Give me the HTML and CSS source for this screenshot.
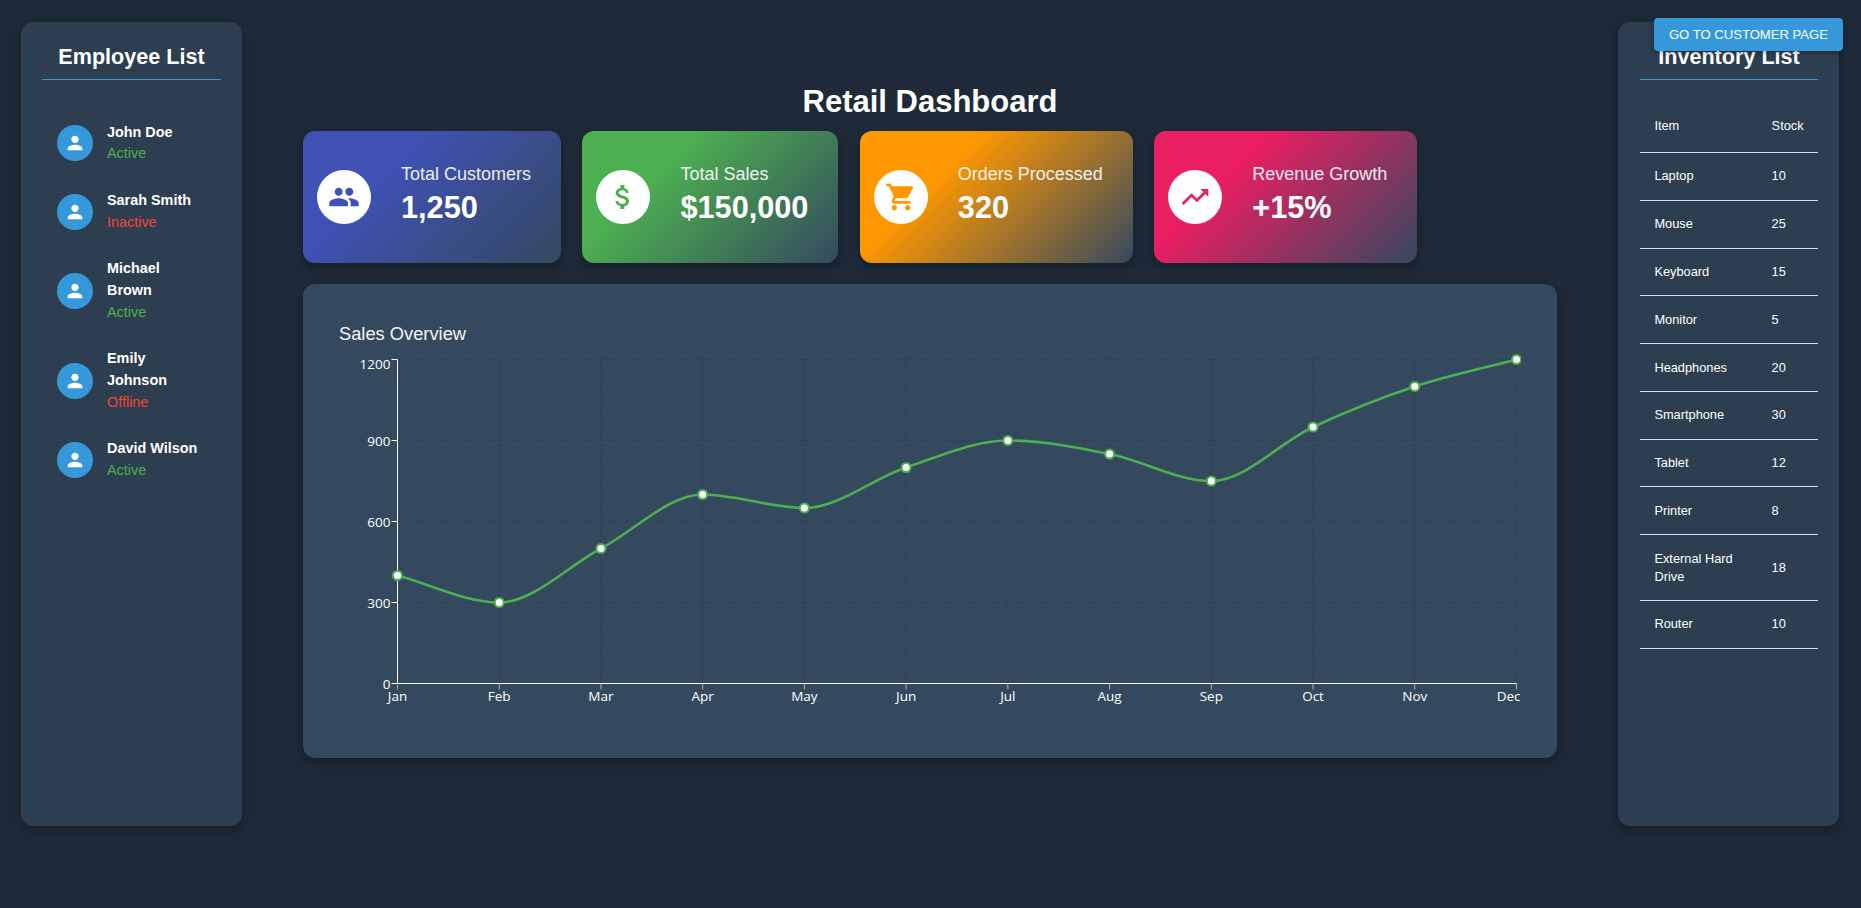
FILE: index.html
```html
<!DOCTYPE html>
<html>

<head>
    <meta charset="utf-8">
    <title>Retail Dashboard</title>
    <link rel="stylesheet" href="styles.css">
</head>

<body>
    <a class="customer-btn" href="#">Go to Customer Page</a>

    <div class="layout">
        <!-- Employee list -->
        <aside class="sidebar">
            <h2>Employee List</h2>
            <ul class="employee-list">
                <li class="employee">
                    <span class="avatar"><svg viewBox="0 0 24 24"><path d="M12 12c2.21 0 4-1.79 4-4s-1.79-4-4-4-4 1.79-4 4 1.79 4 4 4zm0 2c-2.67 0-8 1.34-8 4v2h16v-2c0-2.66-5.33-4-8-4z"/></svg></span>
                    <div class="employee-info">
                        <div class="employee-name">John Doe</div>
                        <div class="status-on">Active</div>
                    </div>
                </li>
                <li class="employee">
                    <span class="avatar"><svg viewBox="0 0 24 24"><path d="M12 12c2.21 0 4-1.79 4-4s-1.79-4-4-4-4 1.79-4 4 1.79 4 4 4zm0 2c-2.67 0-8 1.34-8 4v2h16v-2c0-2.66-5.33-4-8-4z"/></svg></span>
                    <div class="employee-info">
                        <div class="employee-name">Sarah Smith</div>
                        <div class="status-off">Inactive</div>
                    </div>
                </li>
                <li class="employee">
                    <span class="avatar"><svg viewBox="0 0 24 24"><path d="M12 12c2.21 0 4-1.79 4-4s-1.79-4-4-4-4 1.79-4 4 1.79 4 4 4zm0 2c-2.67 0-8 1.34-8 4v2h16v-2c0-2.66-5.33-4-8-4z"/></svg></span>
                    <div class="employee-info">
                        <div class="employee-name">Michael Brown</div>
                        <div class="status-on">Active</div>
                    </div>
                </li>
                <li class="employee">
                    <span class="avatar"><svg viewBox="0 0 24 24"><path d="M12 12c2.21 0 4-1.79 4-4s-1.79-4-4-4-4 1.79-4 4 1.79 4 4 4zm0 2c-2.67 0-8 1.34-8 4v2h16v-2c0-2.66-5.33-4-8-4z"/></svg></span>
                    <div class="employee-info">
                        <div class="employee-name">Emily Johnson</div>
                        <div class="status-off">Offline</div>
                    </div>
                </li>
                <li class="employee">
                    <span class="avatar"><svg viewBox="0 0 24 24"><path d="M12 12c2.21 0 4-1.79 4-4s-1.79-4-4-4-4 1.79-4 4 1.79 4 4 4zm0 2c-2.67 0-8 1.34-8 4v2h16v-2c0-2.66-5.33-4-8-4z"/></svg></span>
                    <div class="employee-info">
                        <div class="employee-name">David Wilson</div>
                        <div class="status-on">Active</div>
                    </div>
                </li>
            </ul>
        </aside>

        <main class="main">
            <h1>Retail Dashboard</h1>

            <div class="cards">
                <div class="card card-customers">
                    <span class="card-icon"><svg viewBox="0 0 24 24"><path d="M16 11c1.66 0 2.99-1.34 2.99-3S17.66 5 16 5c-1.66 0-3 1.34-3 3s1.34 3 3 3zm-8 0c1.66 0 2.99-1.34 2.99-3S9.66 5 8 5C6.34 5 5 6.34 5 8s1.34 3 3 3zm0 2c-2.33 0-7 1.17-7 3.5V19h14v-2.5c0-2.33-4.67-3.5-7-3.5zm8 0c-.29 0-.62.02-.97.05 1.16.84 1.97 1.97 1.97 3.45V19h6v-2.5c0-2.33-4.67-3.5-7-3.5z"/></svg></span>
                    <div class="card-text">
                        <div class="card-label">Total Customers</div>
                        <div class="card-value">1,250</div>
                    </div>
                </div>
                <div class="card card-sales">
                    <span class="card-icon"><svg viewBox="0 0 24 24"><path d="M11.8 10.9c-2.27-.59-3-1.2-3-2.15 0-1.09 1.01-1.85 2.7-1.85 1.78 0 2.44.85 2.5 2.1h2.21c-.07-1.72-1.12-3.3-3.21-3.81V3h-3v2.16c-1.94.42-3.5 1.68-3.5 3.61 0 2.31 1.91 3.46 4.7 4.13 2.5.6 3 1.48 3 2.41 0 .69-.49 1.79-2.7 1.79-2.06 0-2.87-.92-2.98-2.1h-2.2c.12 2.19 1.76 3.42 3.68 3.83V21h3v-2.15c1.95-.37 3.5-1.5 3.5-3.55 0-2.84-2.43-3.81-4.7-4.4z"/></svg></span>
                    <div class="card-text">
                        <div class="card-label">Total Sales</div>
                        <div class="card-value">$150,000</div>
                    </div>
                </div>
                <div class="card card-orders">
                    <span class="card-icon"><svg viewBox="0 0 24 24"><path d="M7 18c-1.1 0-1.99.9-1.99 2S5.9 22 7 22s2-.9 2-2-.9-2-2-2zM1 2v2h2l3.6 7.59-1.35 2.45c-.16.28-.25.61-.25.96 0 1.1.9 2 2 2h12v-2H7.42c-.14 0-.25-.11-.25-.25l.03-.12.9-1.63h7.45c.75 0 1.41-.41 1.75-1.03l3.58-6.49c.08-.14.12-.31.12-.48 0-.55-.45-1-1-1H5.21l-.94-2H1zm16 16c-1.1 0-1.99.9-1.99 2s.89 2 1.99 2 2-.9 2-2-.9-2-2-2z"/></svg></span>
                    <div class="card-text">
                        <div class="card-label">Orders Processed</div>
                        <div class="card-value">320</div>
                    </div>
                </div>
                <div class="card card-revenue">
                    <span class="card-icon"><svg viewBox="0 0 24 24"><path d="M16 6l2.29 2.29-4.88 4.88-4-4L2 16.59 3.41 18l6-6 4 4 6.3-6.29L22 12V6z"/></svg></span>
                    <div class="card-text">
                        <div class="card-label">Revenue Growth</div>
                        <div class="card-value">+15%</div>
                    </div>
                </div>
            </div>

            <!-- Sales chart, drawn by chart.js -->
            <section class="chart-panel">
                <h3>Sales Overview</h3>
                <svg id="salesChart" class="sales-chart" viewBox="0 0 1182 368"></svg>
            </section>
        </main>

        <!-- Inventory list -->
        <aside class="sidebar sidebar-inventory">
            <h2>Inventory List</h2>
            <table class="inventory">
                <thead>
                    <tr><th>Item</th><th>Stock</th></tr>
                </thead>
                <tbody>
                    <tr><td>Laptop</td><td>10</td></tr>
                    <tr><td>Mouse</td><td>25</td></tr>
                    <tr><td>Keyboard</td><td>15</td></tr>
                    <tr><td>Monitor</td><td>5</td></tr>
                    <tr><td>Headphones</td><td>20</td></tr>
                    <tr><td>Smartphone</td><td>30</td></tr>
                    <tr><td>Tablet</td><td>12</td></tr>
                    <tr><td>Printer</td><td>8</td></tr>
                    <tr><td>External Hard Drive</td><td>18</td></tr>
                    <tr><td>Router</td><td>10</td></tr>
                </tbody>
            </table>
        </aside>
    </div>

    <script src="chart.js"></script>
</body>

</html>
```

FILE: styles.css
```css
body {
    font-family: "Liberation Sans", Arial, sans-serif;
    background-color: #1e2a38;
    color: #fff;
    margin: 0;
    padding: 0;
    height: 100vh;
    overflow: hidden;
}

.layout {
    display: flex;
    gap: 61px;
    padding: 22px 22px 0 21px;
}

/* Sidebars */
.sidebar {
    flex: 0 0 221px;
    box-sizing: border-box;
    height: 804px;
    padding: 21px;
    background-color: #2c3e50;
    border-radius: 12px;
    box-shadow: 0 4px 12px rgba(0, 0, 0, 0.3);
}

.sidebar-inventory {
    padding-left: 22px;
}

.sidebar h2 {
    margin: 0;
    padding: 1px 0 9px;
    font-size: 21.6px;
    line-height: 26px;
    text-align: center;
    border-bottom: 1px solid #3498db;
}

.employee-list {
    list-style-type: none;
    margin: 29px 0 0;
    padding: 0;
}

.employee {
    display: flex;
    align-items: center;
    gap: 14px;
    padding: 12.6px 15px;
    font-size: 14.4px;
    line-height: 21.6px;
}

.avatar {
    flex: 0 0 36px;
    height: 36px;
    display: flex;
    align-items: center;
    justify-content: center;
    background-color: #3498db;
    border-radius: 50%;
}

.avatar svg {
    width: 22px;
    height: 22px;
    fill: #fff;
}

.employee-name {
    font-weight: bold;
}

.status-on {
    color: #4caf50;
}

.status-off {
    color: #f44336;
}

/* Inventory table */
.inventory {
    width: 100%;
    margin-top: 20px;
    border-collapse: collapse;
    font-size: 12.8px;
    line-height: 18px;
}

.inventory th,
.inventory td {
    padding: 14.4px;
    text-align: left;
    font-weight: normal;
    border-bottom: 1px solid #ddd;
}

.inventory th {
    padding-top: 17px;
    padding-bottom: 17px;
}

/* Main column */
.main {
    flex: 1;
    min-width: 0;
    display: flex;
    flex-direction: column;
    padding-top: 61px;
}

.main h1 {
    margin: 0 0 11px;
    font-size: 31px;
    line-height: 37px;
    text-align: center;
}

.cards {
    display: flex;
    gap: 21.6px;
    margin-bottom: 21px;
}

.card {
    display: flex;
    align-items: center;
    gap: 30px;
    height: 132px;
    box-sizing: border-box;
    padding: 0 29.8px 0 14px;
    border-radius: 12px;
    box-shadow: 0 4px 10px rgba(0, 0, 0, 0.3);
}

.card-customers {
    background: linear-gradient(135deg, #3f51b5 30%, #34495e 100%);
    color: #3f51b5;
}

.card-sales {
    background: linear-gradient(135deg, #4caf50 30%, #34495e 100%);
    color: #4caf50;
}

.card-orders {
    background: linear-gradient(135deg, #ff9800 30%, #34495e 100%);
    color: #ff9800;
}

.card-revenue {
    background: linear-gradient(135deg, #e91e63 30%, #34495e 100%);
    color: #e91e63;
}

.card-icon {
    flex: 0 0 54px;
    height: 54px;
    display: flex;
    align-items: center;
    justify-content: center;
    background-color: #fff;
    border-radius: 50%;
}

.card-icon svg {
    width: 32px;
    height: 32px;
    fill: currentColor;
}

.card-text {
    padding-bottom: 7px;
}

.card-label {
    color: #fff;
    font-size: 18px;
    line-height: 26px;
    opacity: 0.9;
}

.card-value {
    margin-top: 3px;
    color: #fff;
    font-size: 30.7px;
    font-weight: bold;
    line-height: 36px;
}

/* Chart */
.chart-panel {
    padding: 36px;
    background-color: #34495e;
    border-radius: 12px;
    box-shadow: 0 4px 12px rgba(0, 0, 0, 0.3);
}

.chart-panel h3 {
    margin: 0 0 7px;
    font-size: 18.3px;
    font-weight: normal;
    line-height: 27px;
    opacity: 0.95;
}

.sales-chart {
    display: block;
    width: 100%;
    height: 368px;
    font-family: "Open Sans", sans-serif;
    font-size: 13.5px;
}

.grid-line {
    stroke: #2c3e50;
    stroke-width: 1;
    stroke-dasharray: 3 3;
}

.axis-line {
    stroke: #fff;
    stroke-width: 1;
}

.axis-tick {
    stroke: #a9b3bd;
    stroke-width: 1;
}

.axis-label {
    fill: #fff;
}

.sales-line {
    fill: none;
    stroke: #4caf50;
    stroke-width: 2.6;
}

.sales-point {
    fill: #fff;
    stroke: #4caf50;
    stroke-width: 2;
}

/* Floating button */
.customer-btn {
    position: absolute;
    top: 18px;
    right: 18px;
    z-index: 10;
    padding: 9px 15px;
    background-color: #3498db;
    color: #fff;
    border-radius: 4px;
    font-size: 13.1px;
    line-height: 15px;
    text-decoration: none;
    text-transform: uppercase;
    box-shadow: 0 2px 5px rgba(0, 0, 0, 0.3);
}
```

FILE: chart.js
```js
// Sales line chart, monotone cubic through the monthly values
const months = ["Jan", "Feb", "Mar", "Apr", "May", "Jun", "Jul", "Aug", "Sep", "Oct", "Nov", "Dec"];
const sales = [400, 300, 500, 700, 650, 800, 900, 850, 750, 950, 1100, 1200];
const yTicks = [0, 300, 600, 900, 1200];

const plotLeft = 58.5;
const plotRight = 1177.5;
const plotTop = 5.5;
const plotBottom = 329.5;

const svg = document.getElementById("salesChart");

function xPos(i) {
    return plotLeft + (plotRight - plotLeft) * i / (months.length - 1);
}

function yPos(value) {
    return plotBottom - (plotBottom - plotTop) * value / 1200;
}

function add(tag, attrs, text) {
    const el = document.createElementNS("http://www.w3.org/2000/svg", tag);
    for (const name in attrs) {
        el.setAttribute(name, attrs[name]);
    }
    if (text !== undefined) {
        el.textContent = text;
    }
    svg.appendChild(el);
    return el;
}

// Grid first so the axes sit over it
months.forEach((month, i) => {
    const x = xPos(i);
    const isLast = i === months.length - 1;
    add("line", { class: "grid-line", x1: x, y1: plotTop, x2: x, y2: plotBottom });
    add("line", { class: "axis-tick", x1: x, y1: plotBottom, x2: x, y2: plotBottom + 6 });
    // last label is kept inside the chart's right edge
    add("text", {
        class: "axis-label",
        x: isLast ? 1181.5 : x,
        y: plotBottom + 17,
        "text-anchor": isLast ? "end" : "middle"
    }, month);
});

yTicks.forEach((value) => {
    const y = yPos(value);
    add("line", { class: "grid-line", x1: plotLeft, y1: y, x2: plotRight, y2: y });
    add("line", { class: "axis-line", x1: plotLeft - 6, y1: y, x2: plotLeft, y2: y });
    const labelY = value === 1200 ? y + 9.5 : y + 5.5;
    add("text", { class: "axis-label", x: plotLeft - 7, y: labelY, "text-anchor": "end" }, value);
});

add("line", { class: "axis-line", x1: plotLeft, y1: plotTop, x2: plotLeft, y2: plotBottom });
add("line", { class: "axis-line", x1: plotLeft, y1: plotBottom, x2: plotRight, y2: plotBottom });

// Slopes at each point: flat at local peaks and dips, so the curve never overshoots
const points = sales.map((value, i) => ({ x: xPos(i), y: yPos(value) }));
const last = points.length - 1;
const deltas = [];
const slopes = [];

for (let i = 0; i < last; i++) {
    deltas[i] = (points[i + 1].y - points[i].y) / (points[i + 1].x - points[i].x);
}

slopes[0] = deltas[0];
slopes[last] = deltas[last - 1];
for (let i = 1; i < last; i++) {
    slopes[i] = deltas[i - 1] * deltas[i] <= 0 ? 0 : (deltas[i - 1] + deltas[i]) / 2;
}

for (let i = 0; i < last; i++) {
    const alpha = slopes[i] / deltas[i];
    const beta = slopes[i + 1] / deltas[i];
    const sum = alpha * alpha + beta * beta;
    if (sum > 9) {
        const tau = 3 / Math.sqrt(sum);
        slopes[i] = alpha * tau * deltas[i];
        slopes[i + 1] = beta * tau * deltas[i];
    }
}

let d = `M${points[0].x} ${points[0].y}`;
for (let i = 1; i <= last; i++) {
    const a = points[i - 1];
    const b = points[i];
    const step = (b.x - a.x) / 3;
    d += ` C${a.x + step} ${a.y + slopes[i - 1] * step} ${b.x - step} ${b.y - slopes[i] * step} ${b.x} ${b.y}`;
}
add("path", { class: "sales-line", d: d });

points.forEach((p) => {
    add("circle", { class: "sales-point", cx: p.x, cy: p.y, r: 4.5 });
});
```
